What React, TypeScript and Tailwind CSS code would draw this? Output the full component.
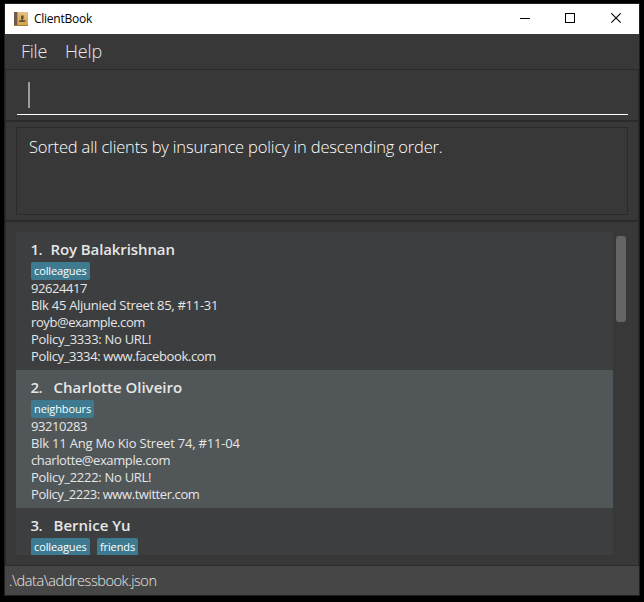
type Line = { text: string; tracking: string };

type Client = {
  index: string;
  indexWidth: string;
  name: string;
  nameTracking: string;
  tags: { label: string; width: string }[];
  lines: Line[];
};

const clients: Client[] = [
  {
    index: "1.",
    indexWidth: "w-[20px]",
    name: "Roy Balakrishnan",
    nameTracking: "tracking-[-0.1px]",
    tags: [{ label: "colleagues", width: "w-[59px]" }],
    lines: [
      { text: "92624417", tracking: "tracking-[-0.42px]" },
      { text: "Blk 45 Aljunied Street 85, #11-31", tracking: "tracking-[-0.28px]" },
      { text: "royb@example.com", tracking: "tracking-[-0.42px]" },
      { text: "Policy_3333: No URL!", tracking: "tracking-[-0.28px]" },
      { text: "Policy_3334: www.facebook.com", tracking: "tracking-[-0.38px]" },
    ],
  },
  {
    index: "2.",
    indexWidth: "w-[23px]",
    name: "Charlotte Oliveiro",
    nameTracking: "tracking-normal",
    tags: [{ label: "neighbours", width: "w-[63px]" }],
    lines: [
      { text: "93210283", tracking: "tracking-[-0.42px]" },
      { text: "Blk 11 Ang Mo Kio Street 74, #11-04", tracking: "tracking-[-0.2px]" },
      { text: "charlotte@example.com", tracking: "tracking-[-0.4px]" },
      { text: "Policy_2222: No URL!", tracking: "tracking-[-0.28px]" },
      { text: "Policy_2223: www.twitter.com", tracking: "tracking-[-0.42px]" },
    ],
  },
  {
    index: "3.",
    indexWidth: "w-[23px]",
    name: "Bernice Yu",
    nameTracking: "tracking-normal",
    tags: [
      { label: "colleagues", width: "w-[59px]" },
      { label: "friends", width: "w-[41px]" },
    ],
    lines: [],
  },
];

function BookIcon() {
  return (
    <svg width="14" height="14" viewBox="0 0 14 14" className="block">
      <defs>
        <linearGradient id="cover" x1="0" y1="0" x2="0" y2="1">
          <stop offset="0" stopColor="#e3c285" />
          <stop offset="1" stopColor="#d6a145" />
        </linearGradient>
      </defs>
      <rect width="14" height="14" rx="0.5" fill="url(#cover)" />
      <rect width="3" height="14" fill="#6f5a4c" />
      <rect x="3" width="1" height="14" fill="#b39363" />
      <rect x="0" y="13" width="14" height="1" fill="#a27c40" />
      <path d="M7 3.500h2.600v3L9 7.300v1h2.300v1.700H5.200V8.300h2.300v-1L7 6.500z" fill="#65502f" />
    </svg>
  );
}

function TitleBar() {
  return (
    <header className="flex h-[30px] shrink-0 items-center bg-white pl-[9px] text-black">
      <BookIcon />
      <span className="ml-[6px] text-[12px] leading-[16px] tracking-[-0.25px]">ClientBook</span>
      <div className="ml-auto flex">
        <svg width="12" height="12" viewBox="0 0 12 12" className="mr-[34px] block">
          <path d="M1 5.500H11" stroke="#000" />
        </svg>
        <svg width="12" height="12" viewBox="0 0 12 12" className="mr-[34px] block">
          <rect x="0.500" y="0.500" width="9" height="9" fill="none" stroke="#000" />
        </svg>
        <svg width="12" height="12" viewBox="0 0 12 12" className="mr-[16px] block">
          <path d="M0.300 0.300L9.700 9.700M9.700 0.300L0.300 9.700" stroke="#000" strokeWidth="1.100" />
        </svg>
      </div>
    </header>
  );
}

function ClientCard({ client, selected }: { client: Client; selected: boolean }) {
  return (
    <li
      className={`h-[138px] shrink-0 pt-[7px] pl-[15px] text-[#e6e6e6] ${selected ? "bg-[#515658]" : "bg-[#3c3e3f]"}`}
    >
      <div className="flex h-[23px] text-[15px] leading-[20px] font-semibold">
        <span className={`${client.indexWidth} -ml-[0.5px] tracking-[-0.6px]`}>{client.index}</span>
        <span className={client.nameTracking}>{client.name}</span>
      </div>
      <div className="flex h-[18px] gap-[7px]">
        {client.tags.map((tag) => (
          <span
            key={tag.label}
            className={`${tag.width} h-[18px] rounded-[2px] bg-[#3e7b91] pl-[3px] text-[11px] leading-[18px] tracking-[-0.12px] text-white`}
          >
            {tag.label}
          </span>
        ))}
      </div>
      {client.lines.map((line) => (
        <p key={line.text} className={`h-[17px] text-[13px] leading-[17px] whitespace-nowrap ${line.tracking}`}>
          {line.text}
        </p>
      ))}
    </li>
  );
}

export default function App() {
  return (
    <div className="h-[602px] w-[644px] bg-black pt-[3px] pl-[4px] font-['Open_Sans',sans-serif]">
      <div className="flex h-[593px] w-[636px] flex-col border border-[#1f1f1f] bg-[#383838]">
        <TitleBar />
        <nav className="flex h-[35px] shrink-0 gap-[18px] pt-[5px] pl-[16px] text-[18px] leading-[25px] font-light text-[#e8e8e8]">
          <span className="tracking-[-0.25px]">File</span>
          <span className="tracking-[-0.2px]">Help</span>
        </nav>
        <div className="flex grow flex-col border border-[#2b2b2b]">
          <section className="h-[52px] shrink-0 border-b-2 border-[#2b2b2b] pt-[6px] pr-[10px] pl-[11px]">
            <div className="h-[39px] border-b border-white pt-[6px] pl-[11px]">
              <div className="h-[26px] w-[2px] bg-[#9b9b9b]" />
            </div>
          </section>
          <section className="h-[100px] shrink-0 border-b-2 border-[#2b2b2b] px-[10px] pt-[5px]">
            <div className="h-[88px] border border-[#2b2b2b] pt-[7px] pl-[12px] text-[16.5px] leading-[23px] font-light tracking-[-0.17px] text-white">
              Sorted all clients by insurance policy in descending order.
            </div>
          </section>
          <section className="flex pt-[10px] pl-[10px]">
            <ul className="flex h-[323px] w-[597px] flex-col overflow-hidden">
              {clients.map((client, i) => (
                <ClientCard key={client.name} client={client} selected={i === 1} />
              ))}
            </ul>
            <div className="mt-[4px] ml-[3px] h-[86px] w-[10px] rounded-[3px] bg-[#646464]" />
          </section>
        </div>
        <footer className="h-[29px] shrink-0 bg-[#464646] pt-[5px] pl-[4px] text-[14.5px] leading-[20px] font-light tracking-[-0.43px] text-[#e8e8e8]">
          .\data\addressbook.json
        </footer>
      </div>
    </div>
  );
}
